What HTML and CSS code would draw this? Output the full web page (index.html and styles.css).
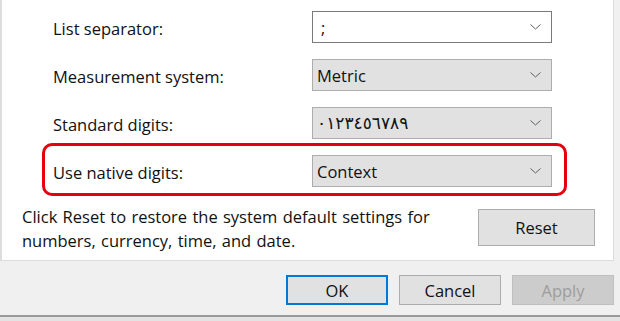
FILE: index.html
```html
<!DOCTYPE html>
<html lang="en">
<head>
  <meta charset="UTF-8">
  <title>Customize Format - Numbers</title>
  <link rel="stylesheet" href="styles.css">
</head>
<body>
  <!-- Tab page -->
  <div class="panel">
    <div class="row">
      <span class="label">List separator:</span>
      <div class="select white">
        <span>;</span>
        <svg class="chev" width="11" height="6" viewBox="0 0 11 6"><path d="M0.5 0.5 L5.5 5 L10.5 0.5" /></svg>
      </div>
    </div>
    <div class="row">
      <span class="label">Measurement system:</span>
      <div class="select">
        <span>Metric</span>
        <svg class="chev" width="11" height="6" viewBox="0 0 11 6"><path d="M0.5 0.5 L5.5 5 L10.5 0.5" /></svg>
      </div>
    </div>
    <div class="row">
      <span class="label">Standard digits:</span>
      <div class="select">
        <span class="arabic">٠١٢٣٤٥٦٧٨٩</span>
        <svg class="chev" width="11" height="6" viewBox="0 0 11 6"><path d="M0.5 0.5 L5.5 5 L10.5 0.5" /></svg>
      </div>
    </div>
    <div class="highlight">
      <div class="row">
        <span class="label">Use native digits:</span>
        <div class="select">
          <span>Context</span>
          <svg class="chev" width="11" height="6" viewBox="0 0 11 6"><path d="M0.5 0.5 L5.5 5 L10.5 0.5" /></svg>
        </div>
      </div>
    </div>
    <div class="reset-row">
      <p class="hint">Click Reset to restore the system default settings for numbers, currency, time, and date.</p>
      <button class="btn reset">Reset</button>
    </div>
  </div>

  <!-- Dialog buttons -->
  <div class="footer">
    <button class="btn default">OK</button>
    <button class="btn">Cancel</button>
    <button class="btn disabled">Apply</button>
  </div>
  <div class="taskline"></div>
</body>
</html>
```

FILE: styles.css
```css
* { box-sizing: border-box; }
body {
  margin: 0;
  width: 620px;
  height: 321px;
  overflow: hidden;
  background: #f0f0f0;
  font-family: "Open Sans", "DejaVu Sans", sans-serif;
  font-size: 16.5px;
  color: #111;
}

/* Tab page */
.panel {
  width: 614px;
  height: 261px;
  background: #fff;
  border-left: 2px solid #dcdcdc;
  border-right: 1px solid #dcdcdc;
  border-bottom: 1px solid #dcdcdc;
  padding-top: 11px;
}
.row {
  display: flex;
  align-items: center;
  height: 32px;
  margin: 0 0 16px 51px;
}
.label { width: 259px; padding-top: 2px; }
.select {
  width: 240px;
  height: 32px;
  display: flex;
  align-items: center;
  justify-content: space-between;
  padding: 0 10px 0 4px;
  background: #e1e1e1;
  border: 1px solid #adadad;
}
.select.white {
  background: #fff;
  border-color: #7a7a7a;
  padding-left: 8px;
}
.chev path { fill: none; stroke: #606060; stroke-width: 1; }
.arabic { font-family: "DejaVu Sans", sans-serif; font-size: 17px; }

.highlight {
  width: 525px;
  margin: -12px 0 0 40px;
  border: 3px solid #e4000c;
  border-radius: 10px;
  padding: 9px 0 6px 8px;
}
.highlight .row { margin: 0; }

.reset-row {
  display: flex;
  justify-content: space-between;
  padding: 9px 18px 0 20px;
}
.hint {
  margin: 0;
  width: 430px;
  line-height: 24px;
  word-spacing: 1px;
}
.btn {
  font-family: inherit;
  font-size: 16.5px;
  color: #111;
  width: 102px;
  height: 30px;
  padding: 0;
  background: #e1e1e1;
  border: 1px solid #adadad;
}
.btn.reset {
  width: 117px;
  height: 37px;
  margin-top: 4px;
}

/* Dialog buttons */
.footer {
  display: flex;
  justify-content: flex-end;
  gap: 11px;
  padding: 14px 6px 0 0;
  height: 54px;
}
.btn.default { border: 2px solid #0078d7; }
.btn.disabled { background: #cccccc; border-color: #bfbfbf; color: #9d9d9d; }
.taskline {
  height: 6px;
  border-top: 2px solid #9a9a9a;
  background: #e3e3e3;
}
```
